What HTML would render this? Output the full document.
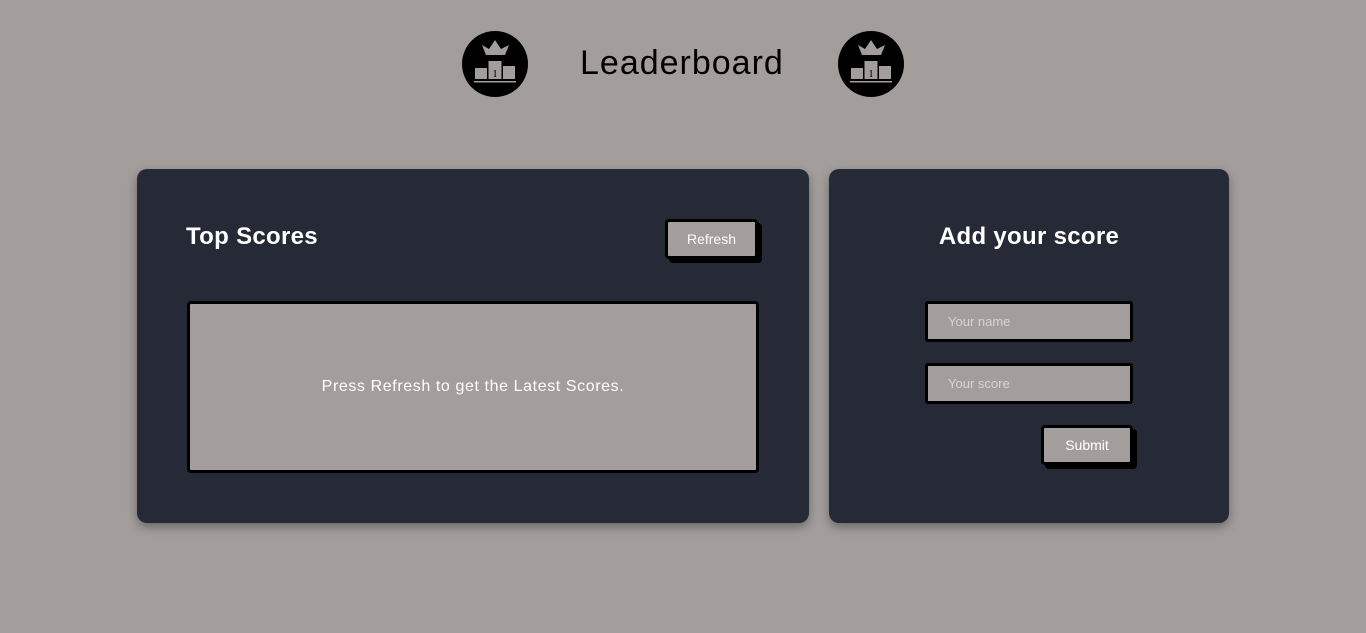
<!DOCTYPE html>
<html><head><style>
body{margin:0;background:#a39e9b;font-family:"Liberation Sans",sans-serif;width:1366px;height:633px;overflow:hidden;position:relative}
.card{position:absolute;background:#262936;border-radius:10px;box-shadow:0 4px 10px rgba(0,0,0,.35)}
.btn{position:absolute;background:#a39e9b;border:3px solid #000;border-radius:4px;box-shadow:4px 4px 0 #000;color:#fff;font-size:14px;display:flex;align-items:center;justify-content:center;box-sizing:border-box}
.inp{position:absolute;background:#a39e9b;border:3px solid #000;border-radius:3px;box-sizing:border-box;color:#d8d4d2;font-size:13px;padding-left:20px;display:flex;align-items:center}
h2{position:absolute;margin:0;color:#fff;font-size:24px;font-weight:bold;letter-spacing:.3px}
</style></head><body>
<svg style="position:absolute;left:462px;top:31px" width="66" height="66" viewBox="462 31 66 66">
<g id="ic"><circle cx="495" cy="64" r="33" fill="#000"/>
<path d="M482 45 L489 49 L495 40 L501 49 L509 45 L505 55 L486 55 Z" fill="#a39e9b"/>
<rect x="475" y="68" width="12" height="11" fill="#a39e9b"/>
<rect x="488.5" y="61" width="13" height="18" fill="#a39e9b"/>
<rect x="503" y="66" width="12" height="13" fill="#a39e9b"/>
<rect x="474" y="81" width="42" height="1.5" fill="#a39e9b"/>
<text x="495" y="77" font-size="11" text-anchor="middle" font-family="Liberation Serif" fill="#000">1</text></g>
</svg>
<svg style="position:absolute;left:838px;top:31px" width="66" height="66" viewBox="462 31 66 66"><use href="#ic"/></svg>
<div style="position:absolute;left:580px;top:44px;font-size:34px;letter-spacing:1px;color:#000">Leaderboard</div>
<div class="card" style="left:137px;top:169px;width:672px;height:354px">
<h2 style="left:49px;top:54px">Top Scores</h2>
<div class="btn" style="left:528px;top:50px;width:93px;height:40px">Refresh</div>
<div style="position:absolute;left:50px;top:132px;width:572px;height:172px;background:#a39e9b;border:3px solid #000;border-radius:4px;box-sizing:border-box;display:flex;align-items:center;justify-content:center;color:#fff;font-size:16px;letter-spacing:.6px">Press Refresh to get the Latest Scores.</div>
</div>
<div class="card" style="left:829px;top:169px;width:400px;height:354px">
<h2 style="left:0;width:400px;text-align:center;top:54px">Add your score</h2>
<div class="inp" style="left:96px;top:132px;width:208px;height:41px">Your name</div>
<div class="inp" style="left:96px;top:194px;width:208px;height:41px">Your score</div>
<div class="btn" style="left:212px;top:256px;width:92px;height:40px">Submit</div>
</div>
</body></html>
